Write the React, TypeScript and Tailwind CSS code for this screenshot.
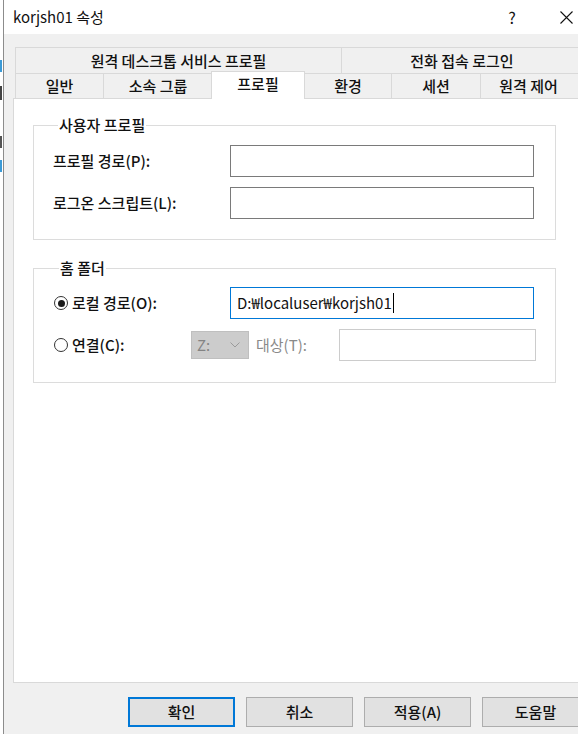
import React from "react";

function Radio({ checked }: { checked: boolean }) {
  return (
    <span className="flex h-[14px] w-[14px] items-center justify-center rounded-full border border-[#333333] bg-white">
      {checked ? <span className="h-[7px] w-[7px] rounded-full bg-[#1a1a1a]" /> : null}
    </span>
  );
}

function Button({ label, primary }: { label: string; primary?: boolean }) {
  return (
    <div
      className={
        "flex h-[30px] w-[107px] items-center justify-center bg-[#e1e1e1] " +
        (primary ? "border-2 border-[#0078d7]" : "border border-[#adadad]")
      }
    >
      {label}
    </div>
  );
}

export default function App() {
  return (
    <div className="flex h-[734px] w-[578px] overflow-hidden bg-white font-['Noto_Sans_CJK_KR','Noto_Sans',sans-serif] text-[15px] font-medium leading-[20px] text-[#111111]">
      {/* window behind */}
      <div className="flex w-[3px] shrink-0 flex-col bg-white">
        <div className="h-[60px]" />
        <div className="h-[12px] w-[2px] bg-[#3b9ad6]" />
        <div className="h-[14px]" />
        <div className="h-[14px] w-[2px] bg-[#444444]" />
        <div className="h-[36px]" />
        <div className="h-[12px] w-[2px] bg-[#555555]" />
        <div className="h-[12px]" />
        <div className="h-[12px] w-[2px] bg-[#3b9ad6]" />
      </div>
      <div className="w-[1px] shrink-0 bg-[#8c8c8c]" />
      {/* dialog */}
      <div className="flex w-[590px] shrink-0 flex-col bg-[#f0f0f0]">
        {/* title bar */}
        <div className="flex h-[34px] items-center bg-white pl-[9px] pr-[8px]">
          <span className="text-[15px] font-normal">korjsh01 속성</span>
          <div className="flex-1" />
          <span className="w-[40px] text-center text-[16px] font-normal">?</span>
          <div className="w-[14px]" />
          <div className="flex w-[40px] items-center justify-center">
            <svg width="13" height="13" viewBox="0 0 13 13">
              <path d="M0.5 0.5 L12.5 12.5 M12.5 0.5 L0.5 12.5" stroke="#111" strokeWidth="1.1" fill="none" />
            </svg>
          </div>
        </div>
        {/* body */}
        <div className="flex flex-col pl-[9px] pt-[13px]">
          {/* tabs */}
          <div className="ml-[2px] flex flex-col">
            <div className="flex h-[26px]">
              <div className="flex w-[326px] items-center justify-center border-l border-t border-[#d9d9d9]">
                원격 데스크톱 서비스 프로필
              </div>
              <div className="flex flex-1 items-center justify-center border-l border-t border-[#d9d9d9] pr-[12px]">
                전화 접속 로그인
              </div>
            </div>
            <div className="flex h-[25px] items-start">
              <div className="flex h-[25px] w-[88px] items-center justify-center border-l border-t border-[#d9d9d9]">
                일반
              </div>
              <div className="flex h-[25px] w-[109px] items-center justify-center border-l border-t border-[#d9d9d9]">
                소속 그룹
              </div>
              <div className="relative z-10 -mx-[1px] -mt-[2px] flex h-[28px] w-[94px] items-start justify-center border-l border-r border-t border-[#d9d9d9] bg-white pt-[2px]">
                프로필
              </div>
              <div className="flex h-[25px] w-[87px] items-center justify-center border-l border-t border-[#d9d9d9]">
                환경
              </div>
              <div className="flex h-[25px] w-[89px] items-center justify-center border-l border-t border-[#d9d9d9]">
                세션
              </div>
              <div className="flex h-[25px] flex-1 items-center justify-center border-l border-t border-[#d9d9d9] pr-[18px]">
                원격 제어
              </div>
            </div>
          </div>
          {/* panel */}
          <div className="flex h-[585px] flex-col border border-[#d9d9d9] bg-white pl-[19px] pt-[16px]">
            <fieldset className="w-[523px] border border-[#dcdcdc] pb-[20px] pl-[19px] pt-[10px]">
              <legend className="ml-[5px] px-[1px]">사용자 프로필</legend>
              <div className="grid grid-cols-[177px_304px] gap-y-[10px]">
                <div className="flex h-[32px] items-center">프로필 경로(P):</div>
                <div className="h-[32px] border border-[#7a7a7a] bg-white" />
                <div className="flex h-[32px] items-center">로그온 스크립트(L):</div>
                <div className="h-[32px] border border-[#7a7a7a] bg-white" />
              </div>
            </fieldset>
            <fieldset className="mt-[18px] w-[523px] border border-[#dcdcdc] pb-[21px] pl-[20px] pt-[9px]">
              <legend className="ml-[5px] px-[1px]">홈 폴더</legend>
              <div className="flex flex-col gap-[10px]">
                <div className="flex h-[32px] items-center">
                  <div className="flex w-[176px] items-center gap-[4px]">
                    <Radio checked />
                    <span>로컬 경로(O):</span>
                  </div>
                  <div className="flex h-[32px] w-[304px] items-center border border-[#0078d7] bg-white pl-[6px]">
                    <span className="font-normal">D:₩localuser₩korjsh01</span>
                    <span className="ml-[1px] h-[20px] w-[1px] bg-black" />
                  </div>
                </div>
                <div className="flex h-[32px] items-center">
                  <div className="flex w-[137px] items-center gap-[4px]">
                    <Radio checked={false} />
                    <span>연결(C):</span>
                  </div>
                  <div className="flex h-[28px] w-[58px] items-center justify-between border border-[#bfbfbf] bg-[#cccccc] pl-[5px] pr-[8px] font-normal text-[#838383]">
                    <span>Z:</span>
                    <svg width="10" height="6" viewBox="0 0 10 6">
                      <path d="M0.5 0.5 L5 5 L9.5 0.5" stroke="#9a9a9a" strokeWidth="1" fill="none" />
                    </svg>
                  </div>
                  <span className="ml-[7px] w-[83px] font-normal text-[#8a8a8a]">대상(T):</span>
                  <div className="h-[32px] w-[197px] border border-[#cccccc] bg-white" />
                </div>
              </div>
            </fieldset>
          </div>
          {/* buttons */}
          <div className="mt-[14px] flex gap-[11px] pl-[115px]">
            <Button label="확인" primary />
            <Button label="취소" />
            <Button label="적용(A)" />
            <Button label="도움말" />
          </div>
        </div>
      </div>
    </div>
  );
}
